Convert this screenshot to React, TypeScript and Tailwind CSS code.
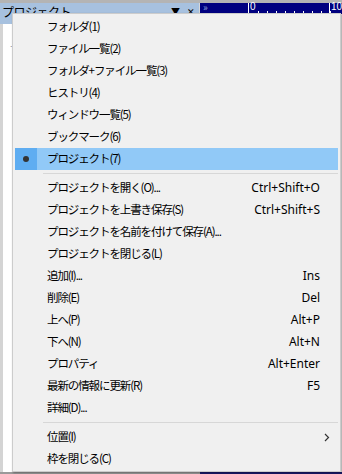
import { Fragment } from 'react';

type Item =
    | { kind: 'item'; label: string; shortcut?: string; checked?: boolean; submenu?: boolean }
    | { kind: 'sep' };

const items: Item[] = [
    { kind: 'item', label: 'フォルダ(1)' },
    { kind: 'item', label: 'ファイル一覧(2)' },
    { kind: 'item', label: 'フォルダ+ファイル一覧(3)' },
    { kind: 'item', label: 'ヒストリ(4)' },
    { kind: 'item', label: 'ウィンドウ一覧(5)' },
    { kind: 'item', label: 'ブックマーク(6)' },
    { kind: 'item', label: 'プロジェクト(7)', checked: true },
    { kind: 'sep' },
    { kind: 'item', label: 'プロジェクトを開く(O)...', shortcut: 'Ctrl+Shift+O' },
    { kind: 'item', label: 'プロジェクトを上書き保存(S)', shortcut: 'Ctrl+Shift+S' },
    { kind: 'item', label: 'プロジェクトを名前を付けて保存(A)...' },
    { kind: 'item', label: 'プロジェクトを閉じる(L)' },
    { kind: 'item', label: '追加(I)...', shortcut: 'Ins' },
    { kind: 'item', label: '削除(E)', shortcut: 'Del' },
    { kind: 'item', label: '上へ(P)', shortcut: 'Alt+P' },
    { kind: 'item', label: '下へ(N)', shortcut: 'Alt+N' },
    { kind: 'item', label: 'プロパティ', shortcut: 'Alt+Enter' },
    { kind: 'item', label: '最新の情報に更新(R)', shortcut: 'F5' },
    { kind: 'item', label: '詳細(D)...' },
    { kind: 'sep' },
    { kind: 'item', label: '位置(I)', submenu: true },
    { kind: 'item', label: '枠を閉じる(C)' },
];

// ruler ticks between 0 and 10
const ticks = [0, 1, 2, 3, 4, 5, 6, 7, 8];

const App = () => {
    return (
        <div
            className="relative w-[342px] h-[474px] overflow-hidden bg-[#f0f0f0] text-black"
            style={{ fontFamily: '"Noto Sans CJK JP", "Noto Sans", sans-serif' }}
        >
            {/* background window behind the menu */}
            <div className="flex flex-col h-full">
                <div className="h-[3px] bg-[#b4b4b4]" />
                <div className="flex">
                    <div className="w-[199px] h-[21px] bg-[#a7c1df] flex items-start pl-[2px] overflow-hidden">
                        <span className="text-[12px] leading-[18px] tracking-[-0.5px] text-black">プロジェクト</span>
                        <span className="ml-auto mr-[4px] flex gap-[7px] text-[9px] leading-[18px]">
                            <span>▼</span>
                            <span>✕</span>
                        </span>
                    </div>
                    <div className="w-px h-[11px] bg-[#d8d8d8]" />
                    <div className="relative flex-1 h-[11px] bg-[#000080] text-white">
                        <span className="absolute left-[3px] top-[-3px] text-[10px] leading-[14px] text-[#8ea2d8]">»</span>
                        <div className="absolute left-[48px] top-0 w-px h-[11px] bg-white" />
                        <span className="absolute left-[50px] top-[-2px] text-[10px] leading-[12px]" style={{ fontFamily: '"Liberation Sans", sans-serif' }}>0</span>
                        {ticks.map((t) => (
                            <div key={t} className="absolute bottom-[1px] w-px h-[2px] bg-white" style={{ left: 58 + t * 9 }} />
                        ))}
                        <div className="absolute left-[129px] top-0 w-px h-[11px] bg-white" />
                        <span className="absolute left-[131px] top-[-2px] text-[10px] leading-[12px]" style={{ fontFamily: '"Liberation Sans", sans-serif' }}>10</span>
                    </div>
                </div>
                <div className="flex flex-1">
                    <div className="w-[200px] flex border-l-[3px] border-[#d4d4d4]">
                        <div className="flex-1 bg-white pt-[6px] pl-[6px]">
                            <span className="text-[8px] leading-[8px] text-[#888]">··</span>
                        </div>
                    </div>
                    <div className="flex-1 bg-[#f0f0f0]" />
                </div>
                <div className="flex h-[2px]">
                    <div className="w-[200px] bg-[#9a9a9a]" />
                    <div className="flex-1 bg-[#1a1a6a]" />
                </div>
            </div>

            {/* popup menu */}
            <div className="absolute left-[12px] top-[13px] w-[329px] h-[459px] bg-[#f0f0f0] border border-[#cccccc] shadow-[1px_1px_2px_rgba(0,0,0,0.35)] pt-[2px] px-[2px]">
                {items.map((item, i) => (
                    <Fragment key={i}>
                        {item.kind === 'sep' ? (
                            <div className="h-[7px] flex items-center pl-[28px]">
                                <div className="h-px w-full bg-[#d7d7d7]" />
                            </div>
                        ) : (
                            <div className={`flex items-center h-[22px] text-[12px] ${item.checked ? 'bg-[#91c9f7]' : ''}`}>
                                <div className={`w-[22px] h-full flex items-center justify-center ${item.checked ? 'bg-[#5fadf1]' : ''}`}>
                                    {item.checked && <div className="w-[6px] h-[6px] rounded-full bg-[#333]" />}
                                </div>
                                <span className="ml-[10px] whitespace-nowrap text-[11.5px] tracking-[-1.1px]">{item.label}</span>
                                {item.shortcut && (
                                    <span className="ml-auto mr-[18px] whitespace-nowrap" style={{ fontFamily: '"Noto Sans", sans-serif' }}>
                                        {item.shortcut}
                                    </span>
                                )}
                                {item.submenu && (
                                    <svg className="ml-auto mr-[8px]" width="6" height="9" viewBox="0 0 6 9">
                                        <path d="M1 1 L4.5 4.5 L1 8" fill="none" stroke="#333" strokeWidth="1.2" />
                                    </svg>
                                )}
                            </div>
                        )}
                    </Fragment>
                ))}
            </div>
        </div>
    );
};

export default App;
